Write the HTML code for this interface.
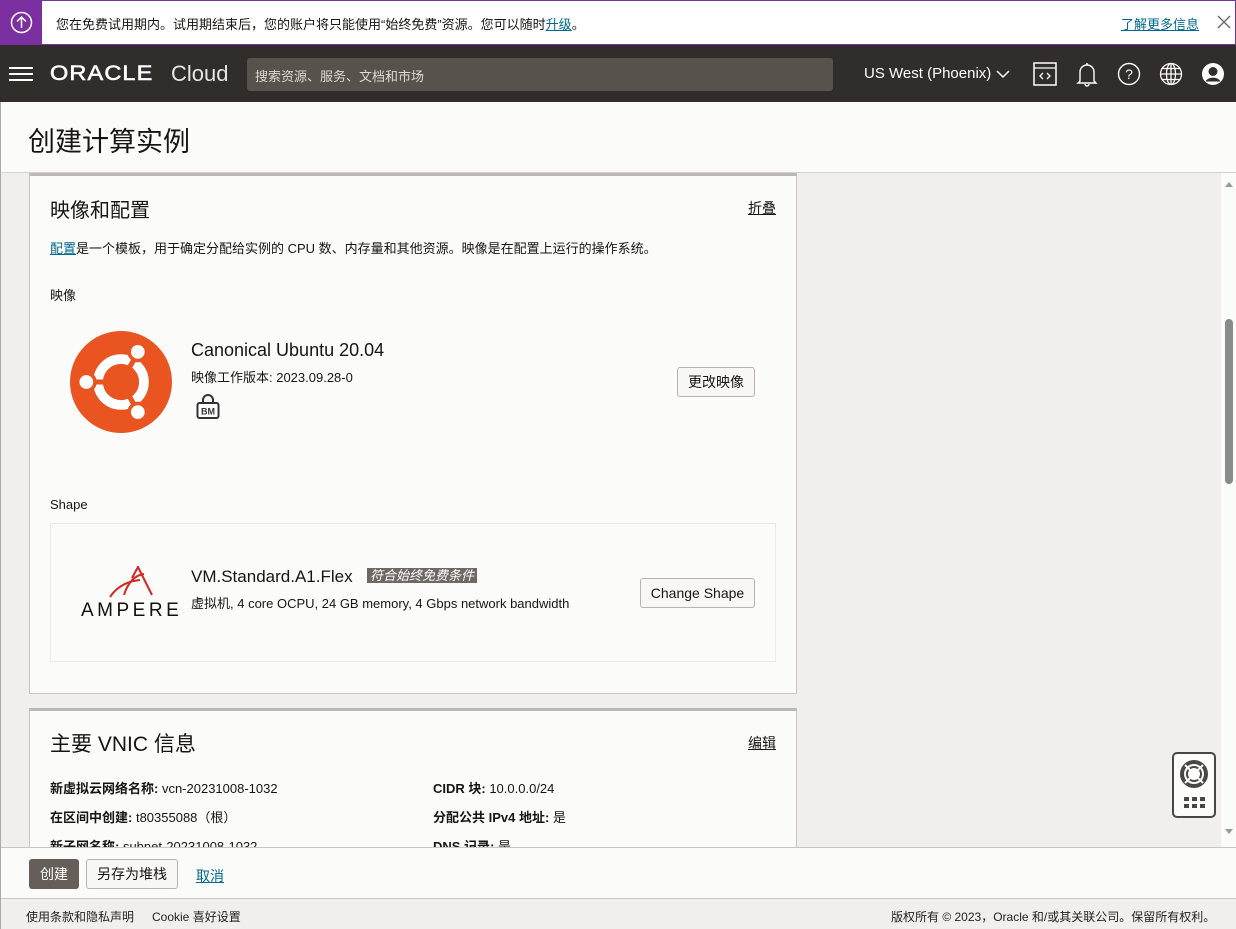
<!DOCTYPE html>
<html><head><meta charset="utf-8"><style>
*{box-sizing:border-box;margin:0;padding:0}
body{width:1236px;height:929px;overflow:hidden;font-family:"Liberation Sans","Noto Sans CJK SC",sans-serif;color:#161513;background:#f1efed;position:relative;font-size:13px}
.a{position:absolute}
a{color:#00688c;text-decoration:underline}
.btn{position:absolute;background:#f8f7f5;border:1px solid #b8b5b0;border-radius:3px;font-size:14px;color:#161513;text-align:center}
b{font-weight:bold}
</style></head><body>
<div class="a" style="left:0;top:0;width:1236px;height:45px;background:#fff;border:1px solid #7b2fa0;border-left:none"></div>
<div class="a" style="left:0;top:0;width:42px;height:45px;background:#7b2fa0"></div>
<svg class="a" style="left:10px;top:11px" width="23" height="23" viewBox="0 0 23 23"><circle cx="11.5" cy="11.5" r="10" fill="none" stroke="#fff" stroke-width="1.5"/><path d="M11.5 17V6M7 10.5l4.5-4.5 4.5 4.5" fill="none" stroke="#fff" stroke-width="1.5"/></svg>
<div class="a" style="left:56px;top:14px;font-size:13px">您在免费试用期内。试用期结束后，您的账户将只能使用“始终免费”资源。您可以随时<a>升级</a>。</div>
<div class="a" style="left:1121px;top:14px;font-size:13px"><a>了解更多信息</a></div>
<svg class="a" style="left:1217px;top:15px" width="14" height="14"><path d="M1 1l12 12M13 1L1 13" stroke="#666" stroke-width="1.3"/></svg>
<div class="a" style="left:0;top:45px;width:1236px;height:57px;background:#312d2a"></div>
<div class="a" style="left:9px;top:67px;width:24px;height:2px;background:#fff;box-shadow:0 6px 0 #fff,0 12px 0 #fff"></div>
<div class="a" style="left:50px;top:62px;color:#fff;font-size:21px;letter-spacing:1px;transform:scaleX(1.12);transform-origin:left;-webkit-text-stroke:0.6px #fff">ORACLE</div>
<div class="a" style="left:171px;top:61px;color:#e8e6e3;font-size:22px">Cloud</div>
<div class="a" style="left:247px;top:58px;width:586px;height:33px;background:#58524d;border-radius:3px;color:#ddd9d5;font-size:13px;padding:8px 8px">搜索资源、服务、文档和市场</div>
<div class="a" style="left:864px;top:65px;color:#fff;font-size:15px">US West (Phoenix)</div>
<svg class="a" style="left:996px;top:70px" width="14" height="9"><path d="M1 1l6 6 6-6" stroke="#fff" fill="none" stroke-width="1.5"/></svg>
<svg class="a" style="left:1033px;top:62px" width="24" height="24"><rect x="1" y="1" width="22" height="22" fill="none" stroke="#fff" stroke-width="1.5"/><path d="M1 6h22M10 11l-3 3 3 3M14 11l3 3-3 3" stroke="#fff" fill="none" stroke-width="1.3"/></svg>
<svg class="a" style="left:1076px;top:61px" width="22" height="26"><path d="M4 20V11a7 7 0 0114 0v9l2 2H2zM9 23a2 2 0 004 0M11 2v2" stroke="#fff" fill="none" stroke-width="1.4"/></svg>
<svg class="a" style="left:1117px;top:62px" width="24" height="24"><circle cx="12" cy="12" r="10.5" fill="none" stroke="#fff" stroke-width="1.4"/><text x="12" y="17" fill="#fff" font-size="14" text-anchor="middle" font-family="Liberation Sans">?</text></svg>
<svg class="a" style="left:1159px;top:62px" width="24" height="24" fill="none" stroke="#fff" stroke-width="1.3"><circle cx="12" cy="12" r="10.5"/><ellipse cx="12" cy="12" rx="4.5" ry="10.5"/><path d="M1.5 12h21M3.5 6.5h17M3.5 17.5h17M12 1.5v21"/></svg>
<svg class="a" style="left:1201px;top:62px" width="24" height="24"><circle cx="12" cy="12" r="11" fill="#fff"/><circle cx="12" cy="9.5" r="4.5" fill="#312d2a"/><path d="M4.5 19.5a8 6 0 0115 0" fill="#312d2a"/></svg>
<div class="a" style="left:1px;top:102px;width:1235px;height:71px;background:#fbfbfa;border-bottom:1px solid #d6d3cf"></div>
<div class="a" style="left:28px;top:120px;font-size:27px;color:#161513">创建计算实例</div>
<div class="a" style="left:0;top:102px;width:1px;height:827px;background:#aaa"></div>
<div class="a" style="left:1221px;top:173px;width:15px;height:674px;background:#fbfbfa"></div>
<div class="a" style="left:1225px;top:182px;width:0;height:0;border:4px solid transparent;border-bottom:5px solid #999;border-top:none"></div>
<div class="a" style="left:1225px;top:829px;width:0;height:0;border:4px solid transparent;border-top:5px solid #999;border-bottom:none"></div>
<div class="a" style="left:1225px;top:319px;width:8px;height:165px;background:#8a8a8a;border-radius:4px"></div>
<div class="a" style="left:29px;top:173px;width:768px;height:521px;background:#fbfbfa;border:1px solid #c9c6c1;border-top:3px solid #bcb8b3"></div>
<div class="a" style="left:50px;top:194px;font-size:20px">映像和配置</div>
<div class="a" style="left:748px;top:198px;font-size:14px;color:#161513;text-decoration:underline">折叠</div>
<div class="a" style="left:50px;top:238px;font-size:13px"><a>配置</a>是一个模板，用于确定分配给实例的 CPU 数、内存量和其他资源。映像是在配置上运行的操作系统。</div>
<div class="a" style="left:50px;top:285px;font-size:13px">映像</div>
<svg class="a" style="left:70px;top:331px" width="102" height="102" viewBox="0 0 100 100"><circle cx="50" cy="50" r="50" fill="#e95420"/><circle cx="50" cy="50" r="22.5" fill="none" stroke="#fff" stroke-width="9.5"/><path d="M50 50L17 50M50 50L66.5 21.5M50 50L66.5 78.5" stroke="#e95420" stroke-width="5"/><g fill="#fff" stroke="#e95420" stroke-width="3.5"><circle cx="16" cy="50" r="8.5"/><circle cx="66.5" cy="20.5" r="8.5"/><circle cx="66.5" cy="79.5" r="8.5"/></g></svg>
<div class="a" style="left:191px;top:340px;font-size:18px">Canonical Ubuntu 20.04</div>
<div class="a" style="left:191px;top:367px;font-size:13px">映像工作版本: 2023.09.28-0</div>
<svg class="a" style="left:196px;top:394px" width="24" height="26"><path d="M7 9V6a5 5 0 0110 0v3" fill="none" stroke="#333" stroke-width="2"/><rect x="1.5" y="9" width="21" height="15" rx="2" fill="#fff" stroke="#333" stroke-width="2"/><text x="12" y="20.5" font-size="9" font-weight="bold" text-anchor="middle" fill="#333" font-family="Liberation Sans">BM</text></svg>
<div class="btn" style="left:677px;top:367px;width:78px;height:30px;line-height:28px">更改映像</div>
<div class="a" style="left:50px;top:497px;font-size:13px">Shape</div>
<div class="a" style="left:50px;top:523px;width:726px;height:139px;border:1px solid #eceae7;background:#fbfbfa"></div>
<svg class="a" style="left:100px;top:566px" width="60" height="32"><path d="M10 31Q20 16 40 14M24 29Q30 10 44 8M32 12L38 1L52 29" stroke="#d5261f" stroke-width="2" fill="none"/></svg>
<div class="a" style="left:81px;top:600px;font-size:19px;letter-spacing:3.5px;color:#111">AMPERE</div>
<div class="a" style="left:191px;top:567px;font-size:17px">VM.Standard.A1.Flex</div>
<div class="a" style="left:367px;top:568px;background:#6f6964;color:#fff;font-size:13px;font-style:italic;padding:0 3px;height:15px;line-height:15px">符合始终免费条件</div>
<div class="a" style="left:191px;top:593px;font-size:13px">虚拟机, 4 core OCPU, 24 GB memory, 4 Gbps network bandwidth</div>
<div class="btn" style="left:640px;top:578px;width:115px;height:30px;line-height:28px">Change Shape</div>
<div class="a" style="left:29px;top:708px;width:768px;height:150px;background:#fbfbfa;border:1px solid #c9c6c1;border-top:3px solid #bcb8b3"></div>
<div class="a" style="left:50px;top:728px;font-size:21px">主要 VNIC 信息</div>
<div class="a" style="left:748px;top:733px;font-size:14px;text-decoration:underline">编辑</div>
<div class="a" style="left:50px;top:778px;font-size:13px"><b>新虚拟云网络名称:</b> vcn-20231008-1032</div>
<div class="a" style="left:50px;top:807px;font-size:13px"><b>在区间中创建:</b> t80355088（根）</div>
<div class="a" style="left:50px;top:836px;font-size:13px"><b>新子网名称:</b> subnet-20231008-1032</div>
<div class="a" style="left:433px;top:778px;font-size:13px"><b>CIDR 块:</b> 10.0.0.0/24</div>
<div class="a" style="left:433px;top:807px;font-size:13px"><b>分配公共 IPv4 地址:</b> 是</div>
<div class="a" style="left:433px;top:836px;font-size:13px"><b>DNS 记录:</b> 是</div>
<div class="a" style="left:1172px;top:752px;width:44px;height:66px;background:#fbfbfa;border:2px solid #4a4643;border-radius:5px"></div>
<svg class="a" style="left:1179px;top:759px" width="30" height="30" fill="none" stroke="#4a4643"><circle cx="15" cy="15" r="12" stroke-width="4"/><circle cx="15" cy="15" r="7" stroke-width="2" fill="#fff"/><path d="M6 6l5 5M24 6l-5 5M6 24l5-5M24 24l-5-5" stroke="#fbfbfa" stroke-width="2"/></svg>
<div class="a" style="left:1184px;top:797px;width:5px;height:4px;background:#4a4643;box-shadow:8px 0 #4a4643,16px 0 #4a4643,0 7px #4a4643,8px 7px #4a4643,16px 7px #4a4643"></div>
<div class="a" style="left:1px;top:847px;width:1235px;height:52px;background:#fbfbfa;border-top:1px solid #c9c6c1;border-bottom:1px solid #c9c6c1"></div>
<div class="a" style="left:29px;top:859px;width:50px;height:30px;background:#655e59;border-radius:3px;color:#fff;font-size:14px;text-align:center;line-height:30px">创建</div>
<div class="btn" style="left:86px;top:859px;width:92px;height:30px;line-height:28px">另存为堆栈</div>
<div class="a" style="left:196px;top:866px;font-size:14px"><a>取消</a></div>
<div class="a" style="left:26px;top:908px;font-size:12px;color:#222">使用条款和隐私声明</div>
<div class="a" style="left:152px;top:908px;font-size:12px;color:#222">Cookie 喜好设置</div>
<div class="a" style="left:891px;top:908px;font-size:12px;color:#222">版权所有 © 2023，Oracle 和/或其关联公司。保留所有权利。</div>
</body></html>
